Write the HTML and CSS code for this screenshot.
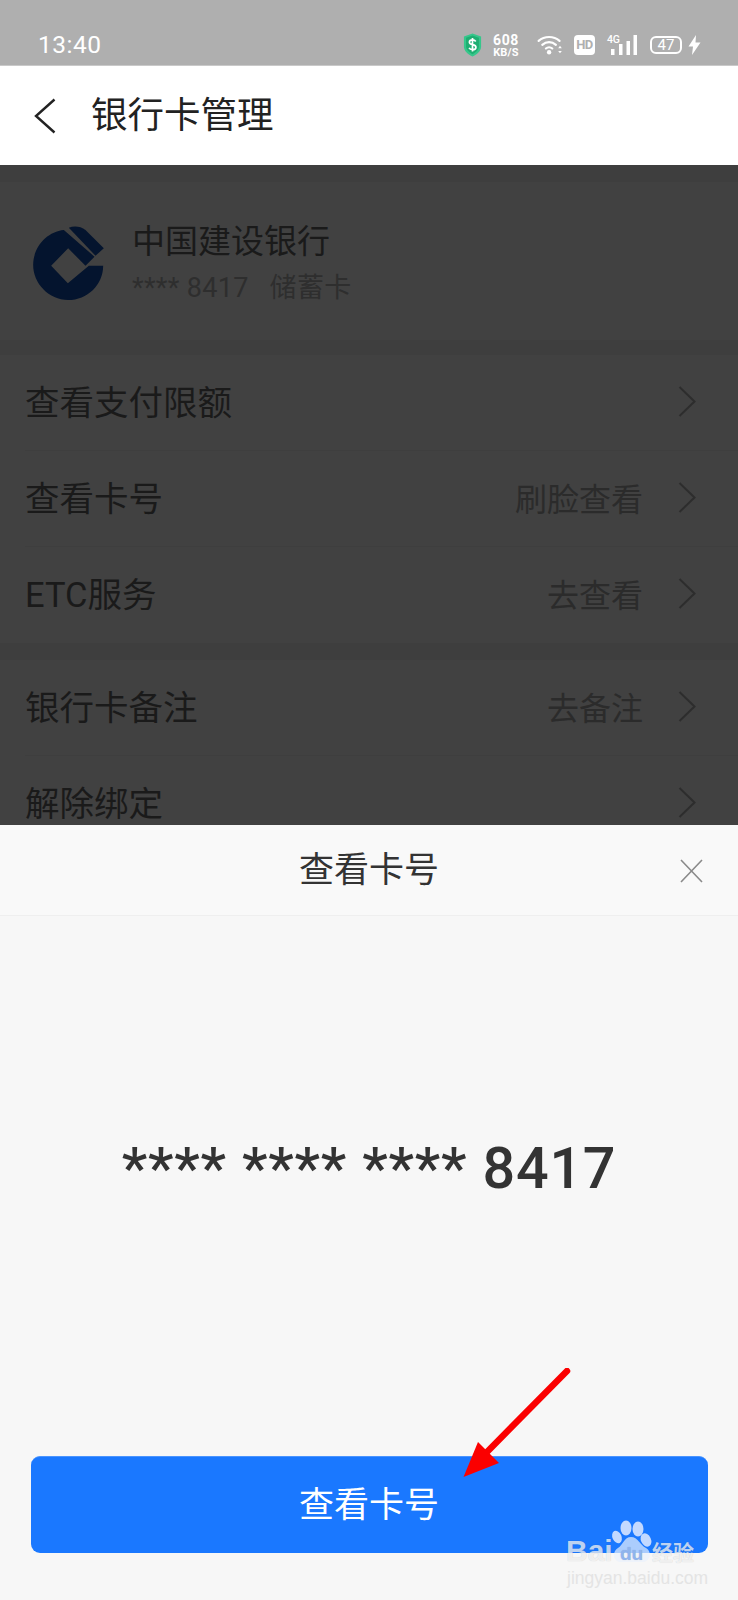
FILE: index.html
```html
<!DOCTYPE html>
<html>
<head>
<meta name="viewport" content="width=device-width, initial-scale=1">
<link rel="stylesheet" href="styles.css">
</head>
<body>
<div class="page">

<div class="status">
  <span class="clock">13:40</span>
  <div class="sicons">
    <svg class="shield" width="19" height="24" viewBox="0 0 22 28"><path d="M11 0.5 L21 4 V16 C21 21 16 25 11 27.5 C6 25 1 21 1 16 V4Z" fill="#35c78b"/><path d="M11 3 L18.5 5.5 V15.5 C18.5 19.5 15 22.500 11 24.800 C7 22.500 3.5 19.5 3.5 15.5 V5.5Z" fill="#1fae72"/><path d="M14.8 9.8 C14 8.6 12.6 8 11 8 C9 8 7.4 9 7.4 10.7 C7.4 14.5 15 12.8 15 16.5 C15 18.4 13.2 19.4 11 19.4 C9.2 19.4 7.7 18.7 7 17.4 M11 5.8 V21.6" fill="none" stroke="#fff" stroke-width="2"/></svg>
    <div class="speed"><b>608</b><b class="unit">KB/S</b></div>
    <svg class="wifi" width="26" height="20" viewBox="0 0 28 22"><g fill="none" stroke="#fff" stroke-width="2.4" stroke-linecap="round"><path d="M1.5 6.500 C8 0.800 18 0.800 24.5 6.500"/><path d="M5.5 10.800 C10 6.800 16 6.800 20.5 10.800"/><path d="M9.5 14.800 C11.500 13 14.500 13 16.500 14.800"/></g><circle cx="13" cy="19" r="2.4" fill="#fff"/><path d="M23 14.500 L25 11.800 L27 14.500Z M23 17.500 L25 20.200 L27 17.500Z" fill="#fff"/></svg>
    <span class="hd">HD</span>
    <div class="net">
      <span class="g4">4G</span>
      <svg width="26" height="20" viewBox="0 0 26 20"><g fill="#fff"><rect x="0" y="14" width="3.500" height="6"/><rect x="8" y="9" width="3.500" height="11"/><rect x="15.500" y="6" width="3.500" height="14"/><rect x="22.500" y="0" width="3.500" height="20"/></g></svg>
    </div>
    <span class="batt">47</span>
    <svg class="bolt" width="13" height="20" viewBox="0 0 13 20"><path d="M8 0 L0.5 11.500 H5 L4 20 L12.500 7.500 H7.500Z" fill="#fff"/></svg>
  </div>
</div>

<div class="topbar">
  <svg class="back" width="22" height="36" viewBox="0 0 22 36"><path d="M20.500 1.500 L2 18 L20.500 34.500" fill="none" stroke="#222" stroke-width="2.4"/></svg>
  <span class="ttl">银行卡管理</span>
</div>

<div class="dimmed">
  <div class="sect card">
    <svg class="ccb" width="71" height="74" viewBox="38 33 212 222">
      <path fill="#04142e" d="M130 45 L222 125 L195 152 L143 100 L92 152 L142 205 L205 152 L248 152 C248 210 200 255 143 255 C85 255 38 205 38 150 C38 95 80 50 130 45Z"/>
      <path fill="#04142e" d="M145 38 C160 32 180 33 195 45 L250 100 L225 122Z"/>
    </svg>
    <div class="cinfo">
      <div class="bank">中国建设银行</div>
      <div class="cnum"><span>**** 8417</span><span>储蓄卡</span></div>
    </div>
  </div>

  <div class="sect rows">
    <div class="row"><span class="rlab">查看支付限额</span><svg class="chev" width="18" height="31" viewBox="0 0 18 31"><path d="M1.500 1 L16.500 15.500 L1.500 30" /></svg></div>
    <div class="row"><span class="rlab">查看卡号</span><span class="rval">刷脸查看</span><svg class="chev" width="18" height="31" viewBox="0 0 18 31"><path d="M1.500 1 L16.500 15.500 L1.500 30" /></svg></div>
    <div class="row"><span class="rlab">ETC服务</span><span class="rval">去查看</span><svg class="chev" width="18" height="31" viewBox="0 0 18 31"><path d="M1.500 1 L16.500 15.500 L1.500 30" /></svg></div>
  </div>

  <div class="sect rows">
    <div class="row"><span class="rlab">银行卡备注</span><span class="rval">去备注</span><svg class="chev" width="18" height="31" viewBox="0 0 18 31"><path d="M1.500 1 L16.500 15.500 L1.500 30" /></svg></div>
    <div class="row"><span class="rlab">解除绑定</span><svg class="chev" width="18" height="31" viewBox="0 0 18 31"><path d="M1.500 1 L16.500 15.500 L1.500 30" /></svg></div>
  </div>
</div>

<!-- bottom sheet -->
<div class="sheet">
  <div class="shead">
    <span>查看卡号</span>
    <svg class="close" width="23" height="24" viewBox="0 0 23 24"><path d="M1 1 L22 23 M22 1 L1 23" stroke="#8a8a8a" stroke-width="1.600" fill="none"/></svg>
  </div>
  <div class="sbody">
    <div class="cardno">**** **** **** 8417</div>
  </div>
  <button class="mainbtn">查看卡号</button>
</div>

<svg class="arrow" width="112" height="112" viewBox="0 0 112 112"><path d="M104 3 L24 84" stroke="#fb0000" stroke-width="6.500" stroke-linecap="round" fill="none"/><path d="M0.500 109 L15 74 L36 95Z" fill="#fb0000"/></svg>

<div class="wmark">
  <svg class="paw" width="90" height="50" viewBox="0 0 90 50"><g fill="#c3d9ff"><ellipse cx="60" cy="8" rx="5.500" ry="7.500"/><ellipse cx="72" cy="9" rx="5.500" ry="7.500"/><ellipse cx="51" cy="17" rx="4.500" ry="6.500" transform="rotate(-25 51 17)"/><ellipse cx="80" cy="20" rx="5" ry="7" transform="rotate(-25 80 20)"/></g><path d="M65 17 C58 17 57 25 52 28 C46 31 47 42 55 42 H76 C85 42 86 31 80 28 C74 25 72 17 65 17Z" fill="#eaf1fc" opacity=".7"/></svg>
  <span class="wbai">Bai</span><span class="wdu">du</span><span class="wjy">经验</span>
  <div class="wurl">jingyan.baidu.com</div>
</div>

</div>
</body>
</html>
```
FILE: styles.css
```css
body{margin:0;font-family:Roboto,"Noto Sans CJK SC",sans-serif;background:#414141;}
.page{position:relative;width:738px;height:1600px;overflow:hidden;display:flex;flex-direction:column;}

.status{height:66px;box-sizing:border-box;padding:25px 37px 0 38px;background:#afafaf;color:#fff;display:flex;justify-content:space-between;align-items:flex-start;border-bottom:1px solid #c9c9c9;flex:none;}
.clock{font-size:24.500px;line-height:40px;letter-spacing:.5px;}
.sicons{display:flex;align-items:center;height:40px;}
.shield{margin-right:10px;}
.speed{display:flex;flex-direction:column;align-items:center;margin-right:17px;width:28px;}
.speed b{font-size:14px;line-height:14px;font-weight:700;letter-spacing:.6px;}
.speed .unit{font-size:11px;line-height:11px;letter-spacing:.2px;}
.wifi{margin-right:11px;}
.hd{width:21px;height:20px;border-radius:4px;background:#fff;color:#afafaf;font-weight:700;font-size:13px;line-height:20px;text-align:center;letter-spacing:-.5px;margin-right:12px;}
.net{position:relative;width:30px;height:20px;margin-right:13px;}
.g4{position:absolute;left:0;top:-1px;font-size:10.500px;font-weight:500;line-height:12px;letter-spacing:-.3px;}
.net svg{position:absolute;left:4px;top:0;display:block;}
.batt{width:28px;height:14px;border:2px solid #fff;border-radius:6px;font-size:15px;line-height:14px;text-align:center;margin-right:6px;}

.topbar{height:99px;background:#fff;display:flex;align-items:center;padding-left:34px;flex:none;}
.back{margin-right:35px;}
.ttl{font-size:36.500px;line-height:60px;color:#222;}

.dimmed{flex:1;background:#3e3e3e;padding-top:17px;}
.sect{background:#414141;}
.card{height:158px;margin-bottom:15px;display:flex;align-items:center;padding-left:33px;}
.ccb{margin-right:28px;margin-top:4px;}
.cinfo{margin-top:3px;}
.bank{font-size:33px;line-height:46px;color:#1a1a1a;}
.cnum{font-size:27px;line-height:36px;color:#2e2e2e;display:flex;gap:21px;margin-top:5px;letter-spacing:.3px;}
.rows{margin-bottom:17px;}
.row{height:96px;margin-left:25px;padding-right:42px;display:flex;align-items:center;border-bottom:1px solid #3e3e3e;box-sizing:border-box;}
.rows .row:last-child{border-bottom:none;}
.rlab{font-size:34.500px;color:#1a1a1a;flex:1;margin-top:-6px;}
.rval{font-size:32px;color:#2b2b2b;margin-right:35px;margin-top:-4px;}
.chev{margin-top:-3px;}
.chev path{fill:none;stroke:#2d2d2d;stroke-width:2;}

.sheet{position:absolute;left:0;right:0;top:825px;bottom:0;background:#f7f7f7;display:flex;flex-direction:column;}
.shead{height:91px;flex:none;background:#f9f9f9;border-bottom:1px solid #efefef;box-sizing:border-box;display:flex;align-items:center;justify-content:center;position:relative;font-size:35px;color:#333;padding-bottom:7px;}
.close{position:absolute;right:35px;top:34px;}
.sbody{flex:1;display:flex;align-items:center;justify-content:center;padding-bottom:36px;}
.cardno{font-size:57.500px;font-weight:500;color:#333;letter-spacing:.8px;}
.mainbtn{display:block;flex:none;margin:0 30.500px 47px 30.500px;height:97px;border:none;border-top:1px solid #4a94ff;border-radius:9px;background:#1a78ff;color:#fff;font:35px "Noto Sans CJK SC",sans-serif;padding:0 0 7px;}

.arrow{position:absolute;left:463px;top:1368px;}

/* watermark sits over the button corner */
.wmark{position:absolute;left:566px;top:1520px;width:140px;height:70px;color:rgba(255,255,255,.72);text-shadow:0 0 1px rgba(0,0,0,.2);}
.paw{position:absolute;left:0;top:0;}
.wbai,.wdu,.wjy,.wurl{position:absolute;white-space:nowrap;}
.wbai{left:0;top:13px;font:700 30px/36px "Liberation Sans",sans-serif;}
.wdu{left:54px;top:23px;font:700 19px/22px "Liberation Sans",sans-serif;color:#8fb4ee;}
.wjy{left:86px;top:18px;font:700 21px/26px "Noto Sans CJK SC",sans-serif;}
.wurl{left:1px;top:47px;font:17.500px/22px "Liberation Sans",sans-serif;color:#e4e4e4;text-shadow:none;}
```
